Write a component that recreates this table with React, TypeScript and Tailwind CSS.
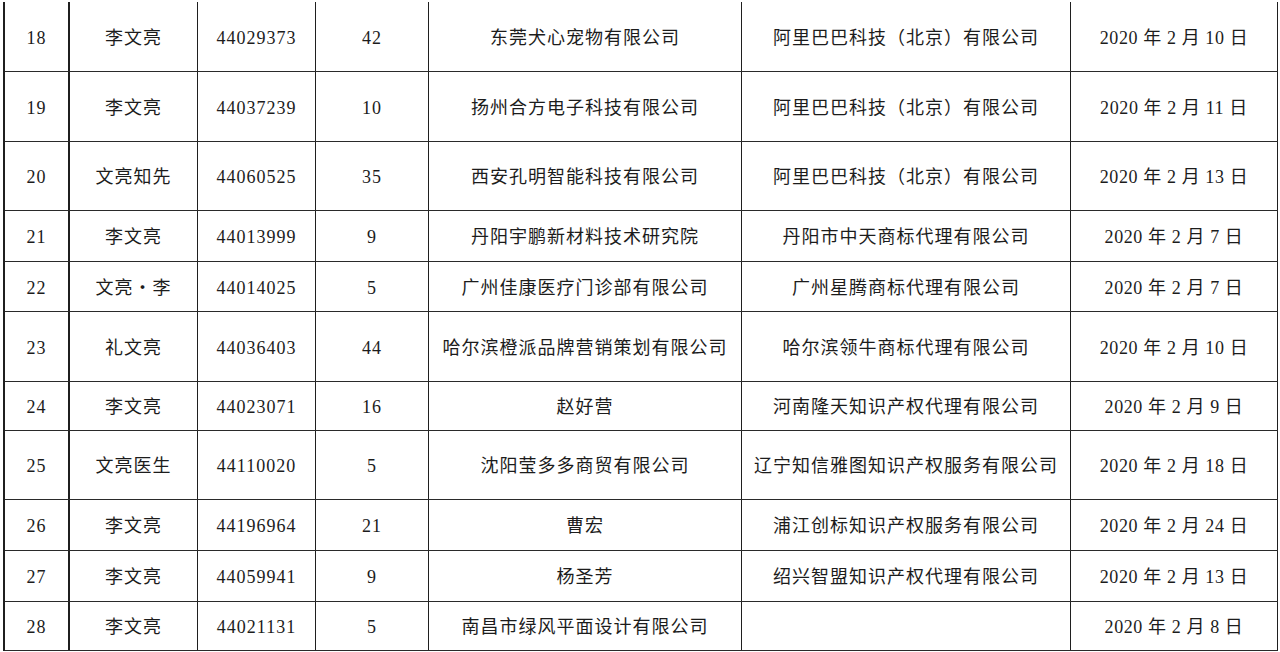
import React from "react";

type Row = {
  no: string;
  name: string;
  reg: string;
  cls: string;
  applicant: string;
  agent: string;
  date: string;
  h: string;
};

const rows: Row[] = [
  { no: "18", name: "李文亮", reg: "44029373", cls: "42", applicant: "东莞犬心宠物有限公司", agent: "阿里巴巴科技（北京）有限公司", date: "2020 年 2 月 10 日", h: "h-[70px]" },
  { no: "19", name: "李文亮", reg: "44037239", cls: "10", applicant: "扬州合方电子科技有限公司", agent: "阿里巴巴科技（北京）有限公司", date: "2020 年 2 月 11 日", h: "h-[70px]" },
  { no: "20", name: "文亮知先", reg: "44060525", cls: "35", applicant: "西安孔明智能科技有限公司", agent: "阿里巴巴科技（北京）有限公司", date: "2020 年 2 月 13 日", h: "h-[69px]" },
  { no: "21", name: "李文亮", reg: "44013999", cls: "9", applicant: "丹阳宇鹏新材料技术研究院", agent: "丹阳市中天商标代理有限公司", date: "2020 年 2 月 7 日", h: "h-[51px]" },
  { no: "22", name: "文亮・李", reg: "44014025", cls: "5", applicant: "广州佳康医疗门诊部有限公司", agent: "广州星腾商标代理有限公司", date: "2020 年 2 月 7 日", h: "h-[50px]" },
  { no: "23", name: "礼文亮", reg: "44036403", cls: "44", applicant: "哈尔滨橙派品牌营销策划有限公司", agent: "哈尔滨领牛商标代理有限公司", date: "2020 年 2 月 10 日", h: "h-[70px]" },
  { no: "24", name: "李文亮", reg: "44023071", cls: "16", applicant: "赵好营", agent: "河南隆天知识产权代理有限公司", date: "2020 年 2 月 9 日", h: "h-[49px]" },
  { no: "25", name: "文亮医生", reg: "44110020", cls: "5", applicant: "沈阳莹多多商贸有限公司", agent: "辽宁知信雅图知识产权服务有限公司", date: "2020 年 2 月 18 日", h: "h-[69px]" },
  { no: "26", name: "李文亮", reg: "44196964", cls: "21", applicant: "曹宏", agent: "浦江创标知识产权服务有限公司", date: "2020 年 2 月 24 日", h: "h-[51px]" },
  { no: "27", name: "李文亮", reg: "44059941", cls: "9", applicant: "杨圣芳", agent: "绍兴智盟知识产权代理有限公司", date: "2020 年 2 月 13 日", h: "h-[51px]" },
  { no: "28", name: "李文亮", reg: "44021131", cls: "5", applicant: "南昌市绿风平面设计有限公司", agent: "", date: "2020 年 2 月 8 日", h: "h-[49px]" },
];

const cell = "flex items-center justify-center pt-[2px] border-r border-[#1f1f1f] whitespace-nowrap";

export default function App() {
  return (
    <div className="w-[1280px] h-[652px] bg-white overflow-hidden">
      <div
        className="ml-[3px] mt-[2px] w-[1275px] border-l-2 border-[#1f1f1f] text-[18px] tracking-[1px] text-[#1c1c1c] leading-none"
        style={{ fontFamily: '"Liberation Serif", "Noto Sans CJK SC", serif' }}
      >
        {rows.map((r) => (
          <div key={r.no} className={`flex border-b border-[#2a2a2a] ${r.h}`}>
            <div className={`${cell} w-[65px] border-r-2`}>{r.no}</div>
            <div className={`${cell} w-[128px]`}>{r.name}</div>
            <div className={`${cell} w-[118px]`}>{r.reg}</div>
            <div className={`${cell} w-[113px]`}>{r.cls}</div>
            <div className={`${cell} w-[313px]`}>{r.applicant}</div>
            <div className={`${cell} w-[329px]`}>{r.agent}</div>
            <div className={`${cell} w-[207px] tracking-[0.6px]`}>{r.date}</div>
          </div>
        ))}
      </div>
    </div>
  );
}
